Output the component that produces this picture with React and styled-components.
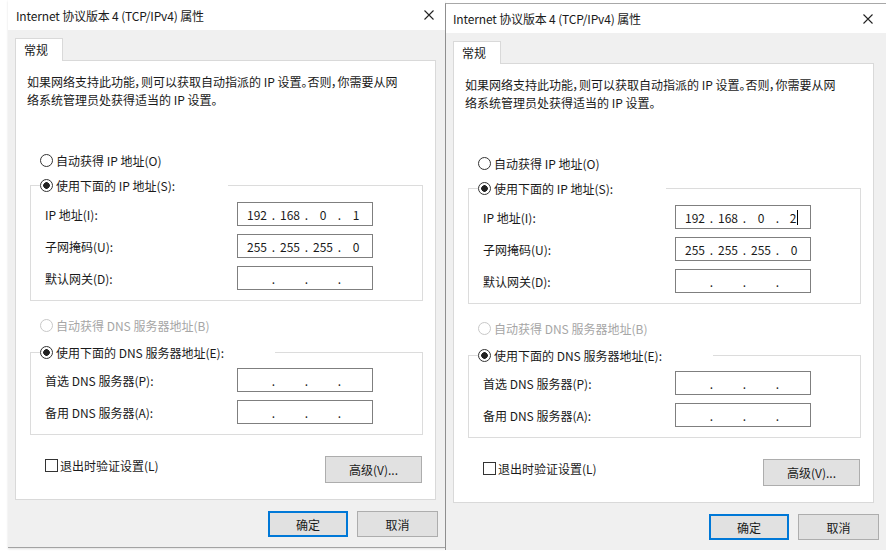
import React from "react";
import styled, { createGlobalStyle } from "styled-components";

const GlobalStyle = createGlobalStyle`
  html, body {
    margin: 0;
    padding: 0;
    background: #ffffff;
  }
  body {
    font-family: "Noto Sans CJK SC", "Microsoft YaHei", sans-serif;
    font-size: 12px;
    color: #1a1a1a;
    overflow: hidden;
  }
`;

const EMPTY = ["", "", "", ""];

export default function App() {
  return (
    <>
      <GlobalStyle />
      <Page>
        {/* Left dialog, IP ends with .1 */}
        <Dialog ip={["192", "168", "0", "1"]} titleHeight={30} />
        {/* Right dialog, framed, caret after the last digit */}
        <Dialog ip={["192", "168", "0", "2"]} titleHeight={29} caret framed />
      </Page>
    </>
  );
}

function Dialog({ ip, caret, framed, titleHeight }) {
  return (
    <Window $framed={framed}>
      <TitleBar $height={titleHeight} $framed={framed}>
        <Title>Internet 协议版本 4 (TCP/IPv4) 属性</Title>
        <CloseIcon viewBox="0 0 10 10">
          <path d="M0.5 0.5 L9.5 9.5 M9.5 0.5 L0.5 9.5" />
        </CloseIcon>
      </TitleBar>

      <Body>
        <Tab>常规</Tab>
        <Panel>
          <Description>
            如果网络支持此功能，则可以获取自动指派的 IP 设置。否则，你需要从网
            <br />
            络系统管理员处获得适当的 IP 设置。
          </Description>

          <RadioRow $top={42}>
            <Radio />
            自动获得 IP 地址(O)
          </RadioRow>

          <Group $top={7} $padTop={8}>
            <Legend $width={188}>
              <Radio $checked />
              使用下面的 IP 地址(S):
            </Legend>
            <Field label="IP 地址(I):" value={ip} caret={caret} />
            <Field label="子网掩码(U):" value={["255", "255", "255", "0"]} />
            <Field label="默认网关(D):" value={EMPTY} />
          </Group>

          <RadioRow $top={15} $disabled>
            <Radio $disabled />
            自动获得 DNS 服务器地址(B)
          </RadioRow>

          <Group $top={9} $padTop={7}>
            <Legend $width={235}>
              <Radio $checked />
              使用下面的 DNS 服务器地址(E):
            </Legend>
            <Field label="首选 DNS 服务器(P):" value={EMPTY} />
            <Field label="备用 DNS 服务器(A):" value={EMPTY} />
          </Group>

          <BottomRow>
            <CheckRow>
              <CheckBox />
              退出时验证设置(L)
            </CheckRow>
            <Button $width={97} $height={27}>
              高级(V)...
            </Button>
          </BottomRow>
        </Panel>

        <Footer>
          <Button $primary $width={80}>
            确定
          </Button>
          <Button $width={81}>取消</Button>
        </Footer>
      </Body>
    </Window>
  );
}

function Field({ label, value, caret }) {
  return (
    <Row>
      <span>{label}</span>
      <IpBox>
        {value.map((part, i) => (
          <React.Fragment key={i}>
            {i > 0 && <Dot>.</Dot>}
            <Seg>
              {part}
              {caret && i === 3 && <Caret />}
            </Seg>
          </React.Fragment>
        ))}
      </IpBox>
    </Row>
  );
}

const Page = styled.div`
  display: flex;
  align-items: flex-start;
  width: 886px;
  height: 557px;
  padding-left: 8px;
  box-sizing: border-box;
  overflow: hidden;
`;

const Window = styled.div`
  flex: none;
  width: ${(p) => (p.$framed ? 441 : 437)}px;
  margin-top: ${(p) => (p.$framed ? 3 : 0)}px;
  box-sizing: border-box;
  background: #f0f0f0;
  border-left: ${(p) => (p.$framed ? "1px solid #8f8f8f" : "none")};
  border-top: ${(p) => (p.$framed ? "1px solid #a8a8a8" : "none")};
  border-bottom: ${(p) => (p.$framed ? "none" : "1px solid #a3a3a3")};
  box-shadow: ${(p) => (p.$framed ? "none" : "0 1px 2px rgba(0, 0, 0, 0.12)")};
`;

const TitleBar = styled.div`
  height: ${(p) => p.$height}px;
  display: flex;
  align-items: center;
  justify-content: space-between;
  padding: 0 ${(p) => (p.$framed ? 13 : 11)}px 0 ${(p) => (p.$framed ? 7 : 8)}px;
  background: #ffffff;
`;

const Title = styled.span`
  font-size: 12px;
  letter-spacing: -0.15px;
  color: #1a1a1a;
`;

const CloseIcon = styled.svg`
  width: 10px;
  height: 10px;
  stroke: #222222;
  stroke-width: 1.1;
  fill: none;
`;

const Body = styled.div`
  padding-top: 8px;
`;

const Tab = styled.div`
  position: relative;
  z-index: 1;
  width: 48px;
  height: 23px;
  margin: 0 0 -1px 7px;
  padding-left: 8px;
  box-sizing: border-box;
  line-height: 22px;
  background: #ffffff;
  border: 1px solid #d9d9d9;
  border-bottom: none;
`;

const Panel = styled.div`
  width: 421px;
  height: 440px;
  margin-left: 7px;
  box-sizing: border-box;
  background: #ffffff;
  border: 1px solid #d9d9d9;
`;

const Description = styled.p`
  margin: 0;
  padding: 12px 0 0 11px;
  line-height: 18px;
  font-feature-settings: "palt";
`;

const RadioRow = styled.div`
  display: flex;
  align-items: center;
  gap: 3px;
  height: 18px;
  margin: ${(p) => p.$top}px 0 0 24px;
  color: ${(p) => (p.$disabled ? "#a6a6a6" : "#1a1a1a")};
`;

const Radio = styled.span`
  flex: none;
  width: 13px;
  height: 13px;
  box-sizing: border-box;
  border-radius: 50%;
  border: 1px solid ${(p) => (p.$disabled ? "#c8c8c8" : "#333333")};
  background: ${(p) =>
    p.$checked
      ? "radial-gradient(circle, #222222 0 3px, #ffffff 3.6px)"
      : "#ffffff"};
`;

const Group = styled.fieldset`
  display: flex;
  flex-direction: column;
  gap: 8px;
  min-width: 0;
  margin: ${(p) => p.$top}px 12px 0 14px;
  padding: ${(p) => p.$padTop}px 0 10px 0;
  border: 1px solid #dcdcdc;
`;

const Legend = styled.legend`
  display: flex;
  align-items: center;
  gap: 3px;
  width: ${(p) => p.$width}px;
  height: 18px;
  margin-left: 9px;
  padding: 0;
  box-sizing: border-box;
`;

const Row = styled.div`
  display: grid;
  grid-template-columns: 192px 136px;
  align-items: center;
  height: 24px;
  padding-left: 14px;
`;

const IpBox = styled.div`
  display: flex;
  align-items: center;
  height: 24px;
  padding-left: 6px;
  box-sizing: border-box;
  border: 1px solid #7f7f7f;
  background: #ffffff;
`;

const Seg = styled.span`
  display: inline-flex;
  align-items: center;
  justify-content: center;
  width: 26px;
`;

const Dot = styled.span`
  width: 7px;
  text-align: center;
`;

const Caret = styled.span`
  display: inline-block;
  width: 1px;
  height: 15px;
  margin-left: 1px;
  background: #000000;
`;

const BottomRow = styled.div`
  display: flex;
  justify-content: space-between;
  align-items: flex-start;
  margin: 21px 13px 0 29px;
`;

const CheckRow = styled.div`
  display: flex;
  align-items: center;
  gap: 2px;
  height: 18px;
`;

const CheckBox = styled.span`
  width: 13px;
  height: 13px;
  box-sizing: border-box;
  border: 1px solid #333333;
  background: #ffffff;
`;

const Footer = styled.div`
  display: flex;
  justify-content: flex-end;
  gap: 9px;
  padding: 11px 7px 10px 0;
`;

const Button = styled.button`
  width: ${(p) => p.$width}px;
  height: ${(p) => p.$height || 26}px;
  box-sizing: border-box;
  padding: 0;
  font: inherit;
  color: #1a1a1a;
  background: #e1e1e1;
  border: ${(p) => (p.$primary ? "2px solid #0078d7" : "1px solid #adadad")};
`;
